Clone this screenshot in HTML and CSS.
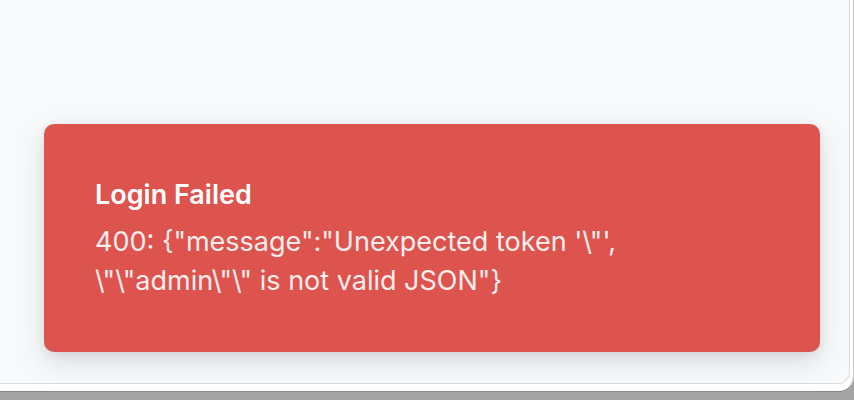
FILE: index.html
```html
<!DOCTYPE html>
<html lang="en">
<head>
<meta charset="utf-8">
<title>Login Failed</title>
<link rel="stylesheet" href="styles.css">
</head>
<body>
<div class="window">
  <div class="panel">
    <div class="toast" role="alert">
      <div class="toast-title">Login Failed</div>
      <div class="toast-message">400: {"message":"Unexpected token '\"', \"\"admin\"\" is not valid JSON"}</div>
    </div>
  </div>
</div>
</body>
</html>
```
FILE: styles.css
```css
html, body {
  margin: 0;
  padding: 0;
}
body {
  width: 854px;
  height: 400px;
  overflow: hidden;
  background: #a4a4a4;
  font-family: Inter, "Noto Sans", sans-serif;
}
.window {
  width: 853px;
  height: 391px;
  background: #ffffff;
  border-bottom-right-radius: 14px;
  box-shadow: 0 1px 0 #8a8a8a, 1px 0 0 #c8c8c8;
}
.panel {
  box-sizing: border-box;
  width: 850px;
  height: 384px;
  background: #f8f9fb;
  border-right: 1px solid #dadbdd;
  border-bottom: 1px solid #dadbdd;
  border-bottom-right-radius: 12px;
  padding: 124px 0 0 44px;
}
.toast {
  box-sizing: border-box;
  width: 776px;
  height: 228px;
  background: #dd534e;
  border-radius: 10px;
  box-shadow: 0 10px 30px rgba(0, 0, 0, 0.12), 0 4px 10px rgba(0, 0, 0, 0.06);
  padding: 54px 51px 0 51px;
  color: #ffffff;
}
.toast-title {
  font-size: 27px;
  font-weight: 600;
  line-height: 33px;
}
.toast-message {
  margin-top: 11px;
  font-size: 27px;
  line-height: 39px;
  color: #fdeeed;
}
```
